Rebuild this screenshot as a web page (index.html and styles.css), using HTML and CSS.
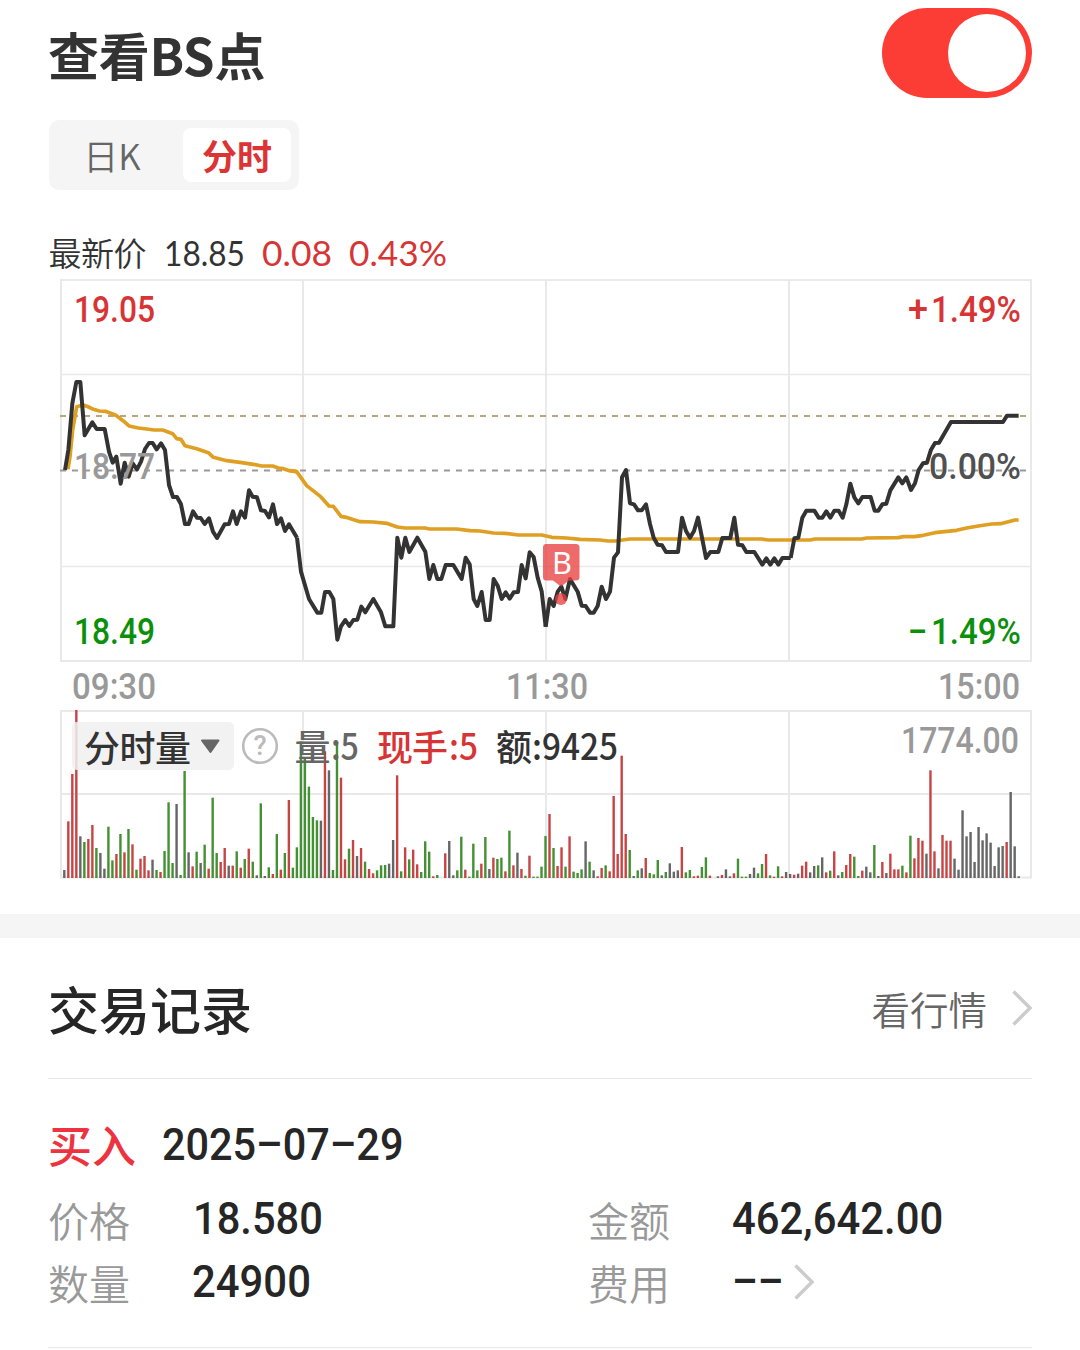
FILE: index.html
```html
<!DOCTYPE html>
<html lang="zh-CN">
<head>
<meta charset="utf-8">
<title>查看BS点</title>
<link rel="stylesheet" href="styles.css">
</head>
<body>
<main class="page">
  <header class="header">
    <h1 class="title">查看BS点</h1>
    <div class="toggle" role="switch" aria-checked="true"><span class="knob"></span></div>
  </header>

  <nav class="tabs">
    <span class="tab">日K</span>
    <span class="tab tab-active">分时</span>
  </nav>

  <svg class="chart" width="1080" height="664" viewBox="0 226 1080 664">
    <g class="quote">
      <text x="48.500" y="266" textLength="98">最新价</text>
      <text class="digits" x="164" y="266" textLength="81" lengthAdjust="spacingAndGlyphs">18.85</text>
      <text class="digits up" x="262" y="266" textLength="70" lengthAdjust="spacingAndGlyphs">0.08</text>
      <text class="digits up" x="349" y="266" textLength="98" lengthAdjust="spacingAndGlyphs">0.43%</text>
    </g>

    <path class="grid" d="M61 280H1031V661H61ZM303 280V661M546 280V661M789 280V661"/>
    <path class="grid thin" d="M61 374.5H1031M61 566.5H1031"/>
    <path class="dash last" d="M60 416H1026"/>
    <path class="dash base" d="M60 470.5H1026"/>

    <g class="average">
      <path transform="translate(50 270) scale(.33333)" d="M54 598L60 560 68 480 80 410 100 405 116 411 130 418 148 423 166 424 198 436 220 453 237 468 265 474 290 477 312 480 338 480 368 491 380 506 393 508 405 527 440 536 475 548 490 562 530 572 570 577 610 583 635 588 668 588 685 594 700 596 718 602 740 605"/>
      <path transform="translate(290 400) scale(.33333)" d="M0 212L20 215 50 257 92 290 117 318 130 319 153 349 168 352 210 365 250 366 290 370 322 381 345 384 405 384 418 387 500 387 540 392 570 393 610 399 645 400 685 405 757 405"/>
      <path transform="translate(530 400) scale(.33333)" d="M35 405L65 412 110 414 150 418 210 420 235 423 255 423 300 417 695 417 715 420 782 420"/>
      <path transform="translate(770 270) scale(.33333)" d="M60 810L120 810 135 807 275 807 290 804 385 803 400 800 433 800 460 796 495 788 560 781 590 774 625 768 665 762 692 761 735 750 746 750"/>
    </g>
    <g class="price">
      <path transform="translate(50 270) scale(.33333)" d="M45 600L55 540 67 400 79 336 91 336 104 496 127 457 140 477 164 477 177 545 188 578 199 560 212 641 224 578 236 620 248 580 261 598 273 575 285 537 297 519 308 519 320 538 333 520 345 540 357 645 369 681 381 681 393 703 405 762 416 762 429 724 441 743 452 744 464 762 477 745 489 785 501 804 524 763 537 762 549 724 560 762 573 724 585 743 597 661 608 680 621 682 633 721 645 723 657 742 669 703 681 762 693 745 705 783 717 763 741 803"/>
      <path transform="translate(290 400) scale(.33333)" d="M21 413L33 515 57 597 82 638 94 638 105 576 118 576 130 597 142 719 153 679 166 660 178 678 190 660 202 659 214 620 226 637 250 597 273 637 286 679 310 679 322 413 334 473 346 413 358 456 382 413 406 455 418 537 430 495 442 537 454 537 467 495 490 495 515 537 527 473 539 493 551 597 562 618 575 576 587 660 599 660 611 537 623 557 635 597 647 577 659 596 671 577 684 576 695 495 707 535 719 457 731 471 743 533 755 574 767 680"/>
      <path transform="translate(530 400) scale(.33333)" d="M47 680L59 597 71 618 83 575 94 560 106 597 120 537 143 575 155 617 167 618 180 638 191 638 203 618 215 560 228 597 240 575 252 473 264 457 276 232 288 210 300 310 312 313 324 331 335 331 348 313 360 372 371 413 383 434 396 436 408 456 444 456 456 353 468 393 480 413 492 393 504 353 516 413 528 474 541 456 565 456 577 414 601 414 613 353 624 434 637 436 649 456 673 456 697 494 709 475 721 494 733 475 745 494 757 474 782 474"/>
      <path transform="translate(770 270) scale(.33333)" d="M62 864L73 805 85 803 97 743 109 722 133 722 146 743 157 743 169 724 181 743 193 722 206 722 218 743 229 703 241 641 253 682 265 700 277 681 302 681 314 722 325 722 337 703 349 701 361 661 385 622 397 640 409 622 423 660 435 640 446 600 459 580 471 578 483 539 495 519 507 518 543 456 699 456 711 437 746 437"/>
    </g>

    <g class="pin">
      <path d="M546 544H576Q579.500 544 579.500 547.500V577Q579.500 580.500 576 580.500H569L561 586.500 553 580.500H546Q543 580.500 543 577V547.500Q543 544 546 544Z"/>
      <circle cx="561" cy="599" r="6"/>
      <text x="552" y="573.500" textLength="20" lengthAdjust="spacingAndGlyphs">B</text>
    </g>

    <g class="axis">
      <text class="up" x="74" y="322" textLength="81" lengthAdjust="spacingAndGlyphs">19.05</text>
      <text class="mid" x="74" y="479" textLength="81" lengthAdjust="spacingAndGlyphs">18.77</text>
      <text class="down" x="74" y="644" textLength="81" lengthAdjust="spacingAndGlyphs">18.49</text>
      <text class="up" x="908" y="322" textLength="20" lengthAdjust="spacingAndGlyphs">+</text>
      <text class="up" x="931" y="322" textLength="90" lengthAdjust="spacingAndGlyphs">1.49%</text>
      <text class="flat" x="929" y="479" textLength="92" lengthAdjust="spacingAndGlyphs">0.00%</text>
      <text class="down" x="908" y="644" textLength="19" lengthAdjust="spacingAndGlyphs">–</text>
      <text class="down" x="931" y="644" textLength="90" lengthAdjust="spacingAndGlyphs">1.49%</text>
      <text class="mid" x="72" y="699" textLength="84" lengthAdjust="spacingAndGlyphs">09:30</text>
      <text class="mid" x="506" y="699" textLength="82" lengthAdjust="spacingAndGlyphs">11:30</text>
      <text class="mid" x="938" y="699" textLength="82" lengthAdjust="spacingAndGlyphs">15:00</text>
    </g>

    <path class="grid" d="M61 711H1031V877.500H61ZM303 711V877M546 711V877M789 711V877M61 794H1031"/>
    <g id="volume"></g>

    <rect class="picker" x="72" y="722" width="162" height="48" rx="5"/>
    <text class="cjk dark" x="84" y="761.500" textLength="107">分时量</text>
    <path class="caret" d="M202 740.500H218.500L210.500 752Z"/>
    <circle class="help" cx="260" cy="746" r="16.800"/>
    <text class="help-mark" x="260" y="755" text-anchor="middle">?</text>
    <text class="cjk gray" x="294.500" y="760.500">量</text>
    <text class="cjk gray" x="331" y="760" textLength="28" lengthAdjust="spacingAndGlyphs">:5</text>
    <text class="cjk up" x="377" y="760.500" textLength="71">现手</text>
    <text class="cjk up" x="449" y="760" textLength="29" lengthAdjust="spacingAndGlyphs">:5</text>
    <text class="cjk dark" x="496" y="760.500">额</text>
    <text class="cjk dark" x="532" y="760" textLength="86" lengthAdjust="spacingAndGlyphs">:9425</text>
    <g class="axis"><text class="mid" x="901" y="753" textLength="118" lengthAdjust="spacingAndGlyphs">1774.00</text></g>
  </svg>

  <section class="records">
    <div class="records-head">
      <h2 class="records-title">交易记录</h2>
      <a class="more">看行情
        <svg class="chevron" width="20" height="36" viewBox="0 0 20 36"><path d="M1.500 1.500L18 18 1.500 34.500"/></svg>
      </a>
    </div>
    <div class="record">
      <div class="record-date"><b class="side">买入</b><span class="num date">2025–07–29</span></div>
      <dl class="fields">
        <dt>价格</dt><dd><span class="num price-num">18.580</span></dd>
        <dt>金额</dt><dd><span class="num">462,642.00</span></dd>
        <dt>数量</dt><dd><span class="num">24900</span></dd>
        <dt>费用</dt><dd class="fee"><span class="num dashes">––</span><svg class="chevron" width="20" height="36" viewBox="0 0 20 36"><path d="M1.500 1.500L18 18 1.500 34.500"/></svg></dd>
      </dl>
    </div>
  </section>
</main>
<script src="volume.js"></script>
</body>
</html>
```
FILE: styles.css
```css
* { box-sizing: border-box; }
body { margin: 0; background: #fff; color: #262626; font-family: "Noto Sans CJK SC", sans-serif; }
.page { width: 1080px; height: 1350px; overflow: hidden; }

.header { display: flex; justify-content: space-between; align-items: flex-start; height: 120px; padding: 8px 48px 0; }
.title { margin: 0; font-size: 51px; line-height: 92px; font-weight: 700; letter-spacing: -.3px; color: #333; }
.toggle { display: flex; justify-content: flex-end; width: 150px; height: 90px; padding: 6px; border-radius: 45px; background: #fc3d35; }
.knob { width: 78px; height: 78px; border-radius: 50%; background: #fff; }

.tabs { display: flex; width: 250px; height: 70px; margin-left: 49px; padding: 8px; border-radius: 10px; background: #f5f5f5; }
.tab { flex: 1; padding-right: 16px; border-radius: 8px; font-size: 35px; line-height: 54px; font-weight: 350; text-align: center; color: #666; }
.tab-active { flex: 0 0 108px; height: 54px; padding: 0; background: #fff; color: #dc3434; font-weight: 700; }

.chart { display: block; margin-top: 36px; }
.quote { font-size: 33px; font-weight: 350; fill: #333; }
.digits { font-family: Lato, sans-serif; font-size: 34px; font-weight: 400; }
.grid { fill: none; stroke: #e9e9e9; stroke-width: 2; }
.thin { stroke-width: 1.4; }
.dash { stroke-width: 2; stroke-dasharray: 6 6; }
.last { stroke: #b9a67c; }
.base { stroke: #999; }
.average, .price { fill: none; stroke-linejoin: round; }
.average { stroke: #df9f22; stroke-width: 11; }
.price { stroke: #333; stroke-width: 12; }
.pin { fill: #e93e3e; fill-opacity: .77; }
.pin text { fill: #fff; fill-opacity: 1; font-family: "Noto Sans", sans-serif; font-size: 31px; }
.axis { font-family: Roboto, sans-serif; font-size: 36px; font-weight: 500; }
.quote .up, .axis .up, .up { fill: #d73535; }
.down { fill: #0c900c; }
.mid { fill: #999; }
.flat { fill: #505050; }
.vol-r { fill: #c74444; }
.vol-g { fill: #439132; }
.vol-k { fill: #666; }
.picker { fill: #f0f0f0; fill-opacity: .86; }
.cjk { font-size: 36px; font-weight: 500; }
.dark { fill: #333; }
.gray { fill: #666; }
.caret { fill: #666; stroke: #666; stroke-width: 2; stroke-linejoin: round; }
.help { fill: none; stroke: #bbb; stroke-width: 2.6; }
.help-mark { fill: #bbb; font-family: Roboto, sans-serif; font-size: 27px; font-weight: 500; }

.records { margin-top: 24px; padding: 0 48px; border-top: 24px solid #f5f5f5; }
.records-head { display: flex; justify-content: space-between; align-items: center; height: 141px; border-bottom: 1px solid #e8e8e8; }
.records-title { margin: 0; font-size: 51px; line-height: 72px; font-weight: 500; }
.more { display: flex; align-items: center; gap: 25px; font-size: 38.500px; line-height: 56px; font-weight: 350; color: #666; }
.chevron { fill: none; stroke: #ccc; stroke-width: 3.500; }
.record { height: 269px; padding-top: 33px; border-bottom: 1px solid #e8e8e8; }
.record-date { display: flex; align-items: center; height: 64px; }
.side { width: 114px; font-size: 44px; font-weight: 500; color: #ee3340; }
.num { display: inline-block; transform-origin: left; font-family: Roboto, sans-serif; font-size: 45px; font-weight: 500; white-space: nowrap; transform: scaleX(.93); }
.date { transform: scaleX(.92); }
.price-num { margin-left: 1px; transform: scaleX(.925); }
.fields { display: grid; grid-template-columns: 144px 396px 144px 1fr; grid-auto-rows: 63px; margin: 11px 0 0; line-height: 63px; }
.fields dt { padding-top: 1px; font-size: 41px; font-weight: 350; color: #999; }
.fields dd { margin: 0; }
.fee { display: flex; align-items: center; }
.dashes { width: 62px; transform: scaleX(.89); }
```
FILE: volume.js
```js
// Per-minute volume: colour (r up, g down, k flat) followed by the bar height, in thirds of a pixel.
const minutes = `k24 r170 r312 r504 k125 g108 r117 r159 g90 k75 k28 g154 g53 r72 g132 r77 g147 r101 g25 r58
r66 r23 k55 g24 r18 g81 g227 g45 k222 g9 g321 k77 r35 g79 k45 g100 r28 g241 g75 r48
r90 k37 r37 g80 r31 g57 r88 g49 k8 g224 k6 g32 r12 g132 r25 g75 r234 g31 g92 g410
g360 g274 g183 g173 k172 r380 k323 g24 g408 r301 r56 g88 r114 k66 r90 g49 r27 r14 g23 g38
g39 k43 k114 r308 g20 r92 g56 r85 r41 g18 g110 g79 r5 g9 k0 r74 k111 k8 g23 g124
r25 g4 g103 g23 r43 g123 k27 r61 g57 g61 r20 g142 r38 k76 r27 g7 r67 g4 g4 g34
g126 r192 g90 r36 r92 g34 r125 g19 g15 g26 k110 g49 k23 r5 r30 g38 r20 r246 r72 r367
r132 g84 k6 g23 k29 r60 g15 g11 g54 k8 g18 k44 k19 k23 r93 g17 g24 r5 r7 g33
g62 r7 k0 k5 r9 k26 k5 r14 g58 g4 g4 k12 k31 g14 g42 r72 g8 r4 g35 r5
k18 k12 r10 k13 r37 r49 k17 k36 g38 k62 r17 g22 r80 k8 g18 r39 r72 g64 g6 r22
k34 k17 g99 k6 r48 k15 r73 r26 r26 g37 r17 g127 r59 r120 r112 k73 r323 r80 k29 r129
r112 r112 k58 k25 k203 k125 k138 k48 k153 k113 k134 k106 k36 k92 k96 r108 k258 k95 k5`.split(/\s+/);

const group = document.getElementById('volume');
minutes.forEach((entry, i) => {
  const height = Number(entry.slice(1)) / 3;
  const bar = document.createElementNS('http://www.w3.org/2000/svg', 'rect');
  bar.setAttribute('class', 'vol-' + entry[0]);
  bar.setAttribute('x', 63.1 + i * 4.01);
  bar.setAttribute('y', 878 - height);
  bar.setAttribute('width', 2.4);
  bar.setAttribute('height', height);
  group.appendChild(bar);
});
```
